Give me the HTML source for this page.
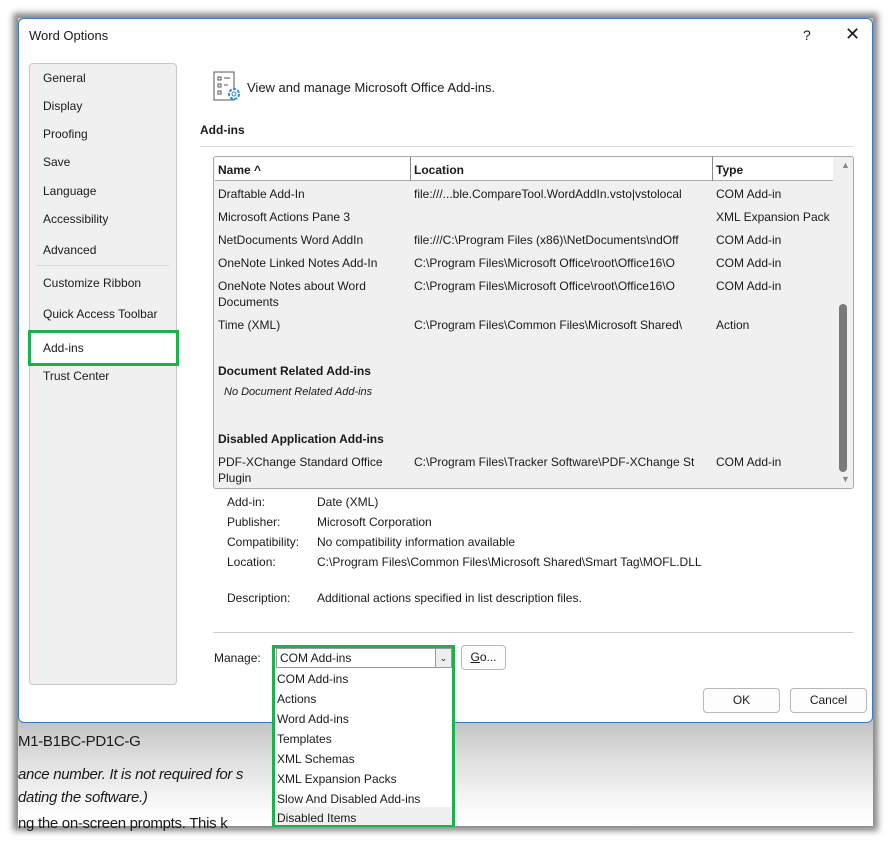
<!DOCTYPE html>
<html><head><style>
*{margin:0;padding:0;box-sizing:border-box}
body{width:891px;height:844px;overflow:hidden;background:#fff;font-family:"Liberation Sans",sans-serif;font-size:12px;color:#1a1a1a;position:relative}
.a{position:absolute;white-space:nowrap}
#inner{position:absolute;left:18px;top:18px;width:855px;height:808px;background:linear-gradient(#c4c4c4 705px,#dedede 740px,#fafafa 790px,#fff);box-shadow:0 0 6px 5px #8a8a8a}
#dlg{position:absolute;left:18px;top:18px;width:855px;height:705px;background:#fff;border:1px solid #3a78c8;border-radius:6px}
.nav{position:absolute;left:29px;top:63px;width:148px;height:622px;background:#f0f0f0;border:1px solid #c8c8c8;border-radius:4px}
.b{font-weight:bold}
.it{font-style:italic}
.btn{position:absolute;border:1px solid #b8b8b8;border-radius:4px;background:#fdfdfd;text-align:center}
.d{font-size:15px;letter-spacing:-0.3px}
</style></head><body>
<div id="inner">
 <div class="a d" style="left:0;top:715px">M1-B1BC-PD1C-G</div>
 <div class="a it d" style="left:0;top:748px">ance number. It is not required for s</div>
 <div class="a it d" style="left:0;top:771px">dating the software.)</div>
 <div class="a d" style="left:0;top:797px">ng the on-screen prompts. This k</div>
</div>
<div id="dlg"></div>
<div class="a" style="left:29px;top:28px;font-size:13px">Word Options</div>
<div class="a" style="left:803px;top:27px;font-size:14px">?</div>
<div class="a" style="left:845px;top:24px;font-size:18px">✕</div>
<div class="nav"></div>
<div class="a" style="left:43px;top:71px">General</div>
<div class="a" style="left:43px;top:99px">Display</div>
<div class="a" style="left:43px;top:127px">Proofing</div>
<div class="a" style="left:43px;top:155px">Save</div>
<div class="a" style="left:43px;top:184px">Language</div>
<div class="a" style="left:43px;top:212px">Accessibility</div>
<div class="a" style="left:43px;top:243px">Advanced</div>
<div class="a" style="left:36px;top:265px;width:133px;height:1px;background:#d8d8d8"></div>
<div class="a" style="left:43px;top:276px">Customize Ribbon</div>
<div class="a" style="left:43px;top:307px">Quick Access Toolbar</div>
<div class="a" style="left:28px;top:330px;width:151px;height:36px;border:3px solid #1db14b;background:#fff"></div>
<div class="a" style="left:43px;top:341px">Add-ins</div>
<div class="a" style="left:43px;top:369px">Trust Center</div>
<svg class="a" style="left:213px;top:71px" width="30" height="32" viewBox="0 0 30 32"><rect x="1" y="1" width="20" height="28" fill="#fff" stroke="#555"/><rect x="5" y="6" width="3" height="3" fill="none" stroke="#555"/><rect x="5" y="13" width="3" height="3" fill="none" stroke="#555"/><rect x="5" y="20" width="3" height="3" fill="none" stroke="#555"/><path d="M11 7h6M11 14h4" stroke="#555"/><circle cx="21" cy="23" r="5" fill="#fff" stroke="#2d8ad8" stroke-width="2" stroke-dasharray="3 1.5"/><circle cx="21" cy="23" r="2" fill="none" stroke="#2d8ad8"/></svg>
<div class="a" style="left:247px;top:80px;font-size:13px">View and manage Microsoft Office Add-ins.</div>
<div class="a b" style="left:200px;top:123px">Add-ins</div>
<div class="a" style="left:200px;top:146px;width:653px;height:1px;background:#d8d8d8"></div>
<div class="a" style="left:213px;top:156px;width:641px;height:333px;background:#f0f0f0;border:1px solid #a8a8a8;border-radius:3px"></div>
<div class="a" style="left:215px;top:157px;width:618px;height:24px;background:#fff;border-bottom:1px solid #aaa"></div>
<div class="a" style="left:410px;top:157px;width:1px;height:24px;background:#888"></div>
<div class="a" style="left:712px;top:157px;width:1px;height:24px;background:#888"></div>
<div class="a b" style="left:218px;top:163px">Name ^</div>
<div class="a b" style="left:414px;top:163px">Location</div>
<div class="a b" style="left:716px;top:163px">Type</div>
<div class="a" style="left:841px;top:160px;font-size:9px;color:#888">▲</div>
<div class="a" style="left:841px;top:474px;font-size:9px;color:#888">▼</div>
<div class="a" style="left:839px;top:304px;width:8px;height:168px;background:#7a7a7a;border-radius:4px"></div>
<div class="a" style="left:218px;top:187px">Draftable Add-In</div><div class="a" style="left:414px;top:187px">file:///...ble.CompareTool.WordAddIn.vsto|vstolocal</div><div class="a" style="left:716px;top:187px">COM Add-in</div>
<div class="a" style="left:218px;top:210px">Microsoft Actions Pane 3</div><div class="a" style="left:716px;top:210px">XML Expansion Pack</div>
<div class="a" style="left:218px;top:233px">NetDocuments Word AddIn</div><div class="a" style="left:414px;top:233px">file:///C:\Program Files (x86)\NetDocuments\ndOff</div><div class="a" style="left:716px;top:233px">COM Add-in</div>
<div class="a" style="left:218px;top:256px">OneNote Linked Notes Add-In</div><div class="a" style="left:414px;top:256px">C:\Program Files\Microsoft Office\root\Office16\O</div><div class="a" style="left:716px;top:256px">COM Add-in</div>
<div class="a" style="left:218px;top:279px">OneNote Notes about Word</div><div class="a" style="left:414px;top:279px">C:\Program Files\Microsoft Office\root\Office16\O</div><div class="a" style="left:716px;top:279px">COM Add-in</div>
<div class="a" style="left:218px;top:295px">Documents</div>
<div class="a" style="left:218px;top:318px">Time (XML)</div><div class="a" style="left:414px;top:318px">C:\Program Files\Common Files\Microsoft Shared\</div><div class="a" style="left:716px;top:318px">Action</div>
<div class="a b" style="left:218px;top:364px">Document Related Add-ins</div>
<div class="a it" style="left:224px;top:386px;font-size:11px">No Document Related Add-ins</div>
<div class="a b" style="left:218px;top:432px">Disabled Application Add-ins</div>
<div class="a" style="left:218px;top:455px">PDF-XChange Standard Office</div><div class="a" style="left:414px;top:455px">C:\Program Files\Tracker Software\PDF-XChange St</div><div class="a" style="left:716px;top:455px">COM Add-in</div>
<div class="a" style="left:218px;top:471px">Plugin</div>
<div class="a" style="left:227px;top:495px">Add-in:</div><div class="a" style="left:317px;top:495px">Date (XML)</div>
<div class="a" style="left:227px;top:515px">Publisher:</div><div class="a" style="left:317px;top:515px">Microsoft Corporation</div>
<div class="a" style="left:227px;top:535px">Compatibility:</div><div class="a" style="left:317px;top:535px">No compatibility information available</div>
<div class="a" style="left:227px;top:555px">Location:</div><div class="a" style="left:317px;top:555px">C:\Program Files\Common Files\Microsoft Shared\Smart Tag\MOFL.DLL</div>
<div class="a" style="left:227px;top:591px">Description:</div><div class="a" style="left:317px;top:591px">Additional actions specified in list description files.</div>
<div class="a" style="left:213px;top:632px;width:640px;height:1px;background:#ccc"></div>
<div class="a" style="left:214px;top:651px">Manage:</div>
<div class="a" style="left:272px;top:645px;width:183px;height:182px;border:3px solid #1db14b;background:#fff"></div>
<div class="a" style="left:276px;top:648px;width:176px;height:20px;border:1px solid #999;background:#fff"></div>
<div class="a" style="left:435px;top:649px;width:16px;height:18px;background:#eee;border-left:1px solid #999;font-size:9px;text-align:center;line-height:18px">⌄</div>
<div class="a" style="left:280px;top:651px">COM Add-ins</div>
<div class="a" style="left:275px;top:807px;width:177px;height:18px;background:#f0f0f0"></div>
<div class="a" style="left:277px;top:672px">COM Add-ins</div>
<div class="a" style="left:277px;top:692px">Actions</div>
<div class="a" style="left:277px;top:712px">Word Add-ins</div>
<div class="a" style="left:277px;top:732px">Templates</div>
<div class="a" style="left:277px;top:752px">XML Schemas</div>
<div class="a" style="left:277px;top:772px">XML Expansion Packs</div>
<div class="a" style="left:277px;top:792px">Slow And Disabled Add-ins</div>
<div class="a" style="left:277px;top:811px">Disabled Items</div>
<div class="btn" style="left:461px;top:645px;width:45px;height:25px;line-height:23px"><u>G</u>o...</div>
<div class="btn" style="left:703px;top:688px;width:77px;height:25px;line-height:23px">OK</div>
<div class="btn" style="left:790px;top:688px;width:77px;height:25px;line-height:23px">Cancel</div>
</body></html>
